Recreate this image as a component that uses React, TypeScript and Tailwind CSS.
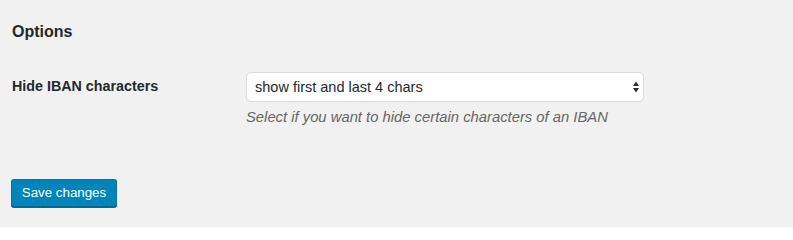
import React from "react";

export default function App() {
  return (
    <div
      className="w-[793px] h-[227px] bg-[#f1f1f1] pl-[11px] pt-[21px] text-[#23282d] overflow-hidden"
      style={{ fontFamily: '"Liberation Sans", Arial, sans-serif' }}
    >
      <h2 className="text-[16px] leading-[20px] font-bold pt-[1px] pl-[1px]">Options</h2>

      <div className="mt-[30px] flex items-start">
        <div className="w-[235px] pt-[3.5px] pl-[1px] text-[14.3px] leading-[20px] font-bold">
          Hide IBAN characters
        </div>
        <div className="flex flex-col">
          <div className="relative w-[398px] h-[30px]">
            <select
              defaultValue="first-last-4"
              className="appearance-none w-full h-full rounded-[5px] border border-[#dcdcdc] bg-white pl-[8px] pr-[24px] text-[14.5px] leading-[20px] text-[#23282d] outline-none"
              style={{ fontFamily: '"Liberation Sans", Arial, sans-serif' }}
            >
              <option value="first-last-4">show first and last 4 chars</option>
              <option value="none">show all chars</option>
            </select>
            <svg
              className="absolute right-[5px] top-[9px] pointer-events-none"
              width="6"
              height="12"
              viewBox="0 0 6 12"
            >
              <path d="M3 0.5 L6 5 L0 5 Z" fill="#2b2b2b" />
              <path d="M0 7 L6 7 L3 11.5 Z" fill="#2b2b2b" />
            </svg>
          </div>
          <p className="mt-[5px] text-[14.8px] leading-[20px] italic text-[#666666]">
            Select if you want to hide certain characters of an IBAN
          </p>
        </div>
      </div>

      <button
        type="button"
        className="mt-[52px] h-[28px] w-[106px] rounded-[3px] border border-[#0073aa] border-b-[#006799] bg-[#0085ba] text-white text-[13.3px] leading-[26px] font-medium shadow-[0_1px_0_#006799]"
        style={{ fontFamily: '"Liberation Sans", Arial, sans-serif' }}
      >
        Save changes
      </button>
    </div>
  );
}
